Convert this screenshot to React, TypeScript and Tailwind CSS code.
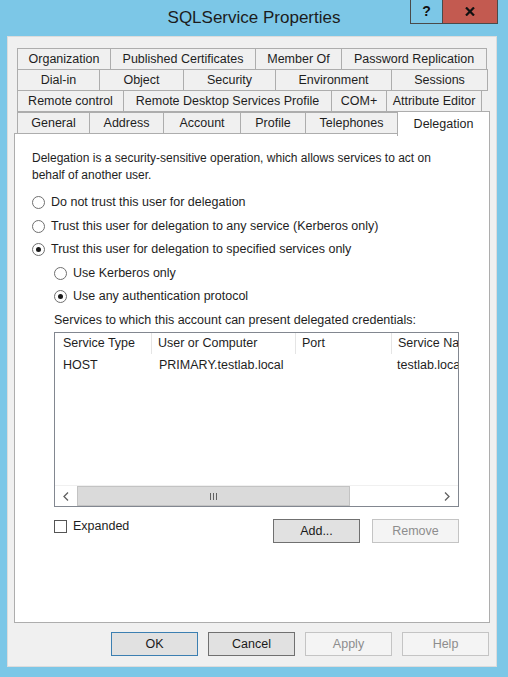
import React from "react";

const font = { fontFamily: '"Liberation Sans", Arial, sans-serif' };

type Tab = { label: string; w: string };

const rows: Tab[][] = [
  [
    { label: "Organization", w: "w-[94px]" },
    { label: "Published Certificates", w: "w-[146px]" },
    { label: "Member Of", w: "w-[87px]" },
    { label: "Password Replication", w: "w-[146px]" },
  ],
  [
    { label: "Dial-in", w: "w-[83px]" },
    { label: "Object", w: "w-[85px]" },
    { label: "Security", w: "w-[93px]" },
    { label: "Environment", w: "w-[117px]" },
    { label: "Sessions", w: "w-[97px]" },
  ],
  [
    { label: "Remote control", w: "w-[107px]" },
    { label: "Remote Desktop Services Profile", w: "w-[209px]" },
    { label: "COM+", w: "w-[56px]" },
    { label: "Attribute Editor", w: "w-[96px]" },
  ],
];

const lastRow: Tab[] = [
  { label: "General", w: "w-[73px]" },
  { label: "Address", w: "w-[75px]" },
  { label: "Account", w: "w-[78px]" },
  { label: "Profile", w: "w-[66px]" },
  { label: "Telephones", w: "w-[93px]" },
];

function TabButton({ tab, first }: { tab: Tab; first: boolean }) {
  return (
    <div
      className={`${tab.w} ${first ? "" : "-ml-px"} h-[22px] flex items-center justify-center border border-[#adadad] bg-[#f0f0f0] text-[12.5px] text-[#1e1e1e] whitespace-nowrap`}
    >
      {tab.label}
    </div>
  );
}

function Radio({ checked, label }: { checked?: boolean; label: string }) {
  return (
    <div className="flex items-center gap-[6px]">
      <span className="w-[13px] h-[13px] rounded-full border border-[#6f6f6f] bg-white flex items-center justify-center">
        {checked && <span className="w-[5px] h-[5px] rounded-full bg-[#1a1a1a]" />}
      </span>
      <span>{label}</span>
    </div>
  );
}

function Button({
  label,
  variant = "normal",
}: {
  label: string;
  variant?: "normal" | "default" | "focus" | "disabled";
}) {
  const cls = {
    normal: "border-[#adadad] bg-[#e1e1e1] text-[#1a1a1a]",
    default: "border-[#3c7fb1] bg-[#e1e1e1] text-[#1a1a1a]",
    focus: "border-[#707070] bg-[#e1e1e1] text-[#1a1a1a]",
    disabled: "border-[#c4c4c4] bg-[#f4f4f4] text-[#8d8d8d]",
  }[variant];
  return (
    <div className={`w-[87px] h-[24px] border flex items-center justify-center text-[12.5px] ${cls}`}>
      {label}
    </div>
  );
}

export default function App() {
  return (
    <div className="w-[508px] h-[677px] bg-[#7cc7e7] flex flex-col overflow-hidden" style={font}>
      {/* title bar */}
      <div className="h-[36px] flex items-start">
        <div className="flex-1 pl-[98px] h-[36px] flex items-center justify-center text-[17px] text-[#1c1c1c]">
          SQLService Properties
        </div>
        <div className="flex mr-[10px]">
          <div className="w-[33px] h-[24px] border border-t-0 border-[#4a4a4a] bg-[#7cc7e7] flex items-center justify-center text-[14px] font-bold text-[#111]">
            ?
          </div>
          <div className="w-[55px] h-[24px] border border-t-0 border-l-0 border-[#4a4a4a] bg-[#c35a50] flex items-center justify-center">
            <svg width="10" height="9" viewBox="0 0 10 9">
              <path d="M1 0.5 L9 8.5 M9 0.5 L1 8.5" stroke="#111" strokeWidth="2.2" />
            </svg>
          </div>
        </div>
      </div>

      {/* dialog body */}
      <div className="ml-[7px] w-[490px] h-[631px] bg-[#f0f0f0] border border-[#dcdcdc] pt-[11px] px-[6px] flex flex-col">
        <div className="flex flex-col pl-[3px]">
          {rows.map((row, i) => (
            <div key={i} className={`flex ${i > 0 ? "-mt-px" : ""}`}>
              {row.map((t, j) => (
                <TabButton key={t.label} tab={t} first={j === 0} />
              ))}
            </div>
          ))}
          <div className="flex items-end -mt-px">
            {lastRow.map((t, j) => (
              <TabButton key={t.label} tab={t} first={j === 0} />
            ))}
            <div className="relative z-10 -ml-px w-[93px] h-[25px] -mb-[2px] border border-b-0 border-[#adadad] bg-white flex items-start justify-center pt-[3px] text-[12.5px] text-[#1e1e1e]">
              Delegation
            </div>
          </div>
        </div>

        {/* panel */}
        <div className="-mt-px h-[490px] bg-white border border-[#adadad] pt-[16px] pl-[17px] pr-[10px] text-[12.5px] text-[#1e1e1e] flex flex-col">
          <p className="w-[432px] text-[12px] leading-[17px]">
            Delegation is a security-sensitive operation, which allows services to act on behalf of another user.
          </p>
          <div className="mt-[6px] flex flex-col">
            <div className="h-[24px] flex items-center">
              <Radio label="Do not trust this user for delegation" />
            </div>
            <div className="h-[24px] flex items-center">
              <Radio label="Trust this user for delegation to any service (Kerberos only)" />
            </div>
            <div className="h-[23px] flex items-center">
              <Radio checked label="Trust this user for delegation to specified services only" />
            </div>
            <div className="pl-[22px] flex flex-col">
              <div className="h-[24px] flex items-center">
                <Radio label="Use Kerberos only" />
              </div>
              <div className="h-[23px] flex items-center">
                <Radio checked label="Use any authentication protocol" />
              </div>
              <div className="h-[24px] flex items-center whitespace-nowrap">
                Services to which this account can present delegated credentials:
              </div>

              {/* list view */}
              <div className="w-[405px] h-[175px] border border-[#828790] bg-white flex flex-col">
                <div className="h-[21px] flex items-center">
                  <div className="w-[97px] h-full flex items-center pl-[8px] border-r border-[#e5e5e5]">Service Type</div>
                  <div className="w-[144px] h-full flex items-center pl-[6px] border-r border-[#e5e5e5]">User or Computer</div>
                  <div className="w-[96px] h-full flex items-center pl-[6px] border-r border-[#e5e5e5]">Port</div>
                  <div className="flex-1 h-full flex items-center pl-[6px] overflow-hidden whitespace-nowrap">Service Name</div>
                </div>
                <div className="h-[22px] flex items-center">
                  <div className="w-[97px] pl-[8px]">HOST</div>
                  <div className="w-[144px] pl-[7px] whitespace-nowrap">PRIMARY.testlab.local</div>
                  <div className="w-[96px]" />
                  <div className="flex-1 pl-[5px] overflow-hidden whitespace-nowrap">testlab.local</div>
                </div>
                <div className="flex-1" />
                {/* horizontal scrollbar */}
                <div className="h-[21px] flex bg-white border-t border-[#f0f0f0]">
                  <div className="w-[22px] flex items-center justify-center">
                    <svg width="6" height="9" viewBox="0 0 6 9">
                      <path d="M5 0.5 L1 4.5 L5 8.5" fill="none" stroke="#606060" strokeWidth="1.3" />
                    </svg>
                  </div>
                  <div className="w-[273px] bg-[#dadada] border border-[#c3c3c3] flex items-center justify-center">
                    <svg width="7" height="7" viewBox="0 0 7 7">
                      <path d="M0.5 0 V7 M3.5 0 V7 M6.5 0 V7" stroke="#606060" strokeWidth="1" />
                    </svg>
                  </div>
                  <div className="flex-1" />
                  <div className="w-[22px] flex items-center justify-center">
                    <svg width="6" height="9" viewBox="0 0 6 9">
                      <path d="M1 0.5 L5 4.5 L1 8.5" fill="none" stroke="#606060" strokeWidth="1.3" />
                    </svg>
                  </div>
                </div>
              </div>

              <div className="mt-[12px] flex items-start w-[405px]">
                <div className="flex items-center gap-[6px] h-[15px]">
                  <span className="w-[13px] h-[13px] border border-[#555] bg-white" />
                  <span>Expanded</span>
                </div>
                <div className="flex-1" />
                <div className="flex gap-[12px]">
                  <Button label="Add..." variant="focus" />
                  <Button label="Remove" variant="disabled" />
                </div>
              </div>
            </div>
          </div>
        </div>

        {/* bottom buttons */}
        <div className="mt-[9px] flex justify-end gap-[10px] pr-[1px]">
          <Button label="OK" variant="default" />
          <Button label="Cancel" variant="focus" />
          <Button label="Apply" variant="disabled" />
          <Button label="Help" variant="disabled" />
        </div>
      </div>
    </div>
  );
}
